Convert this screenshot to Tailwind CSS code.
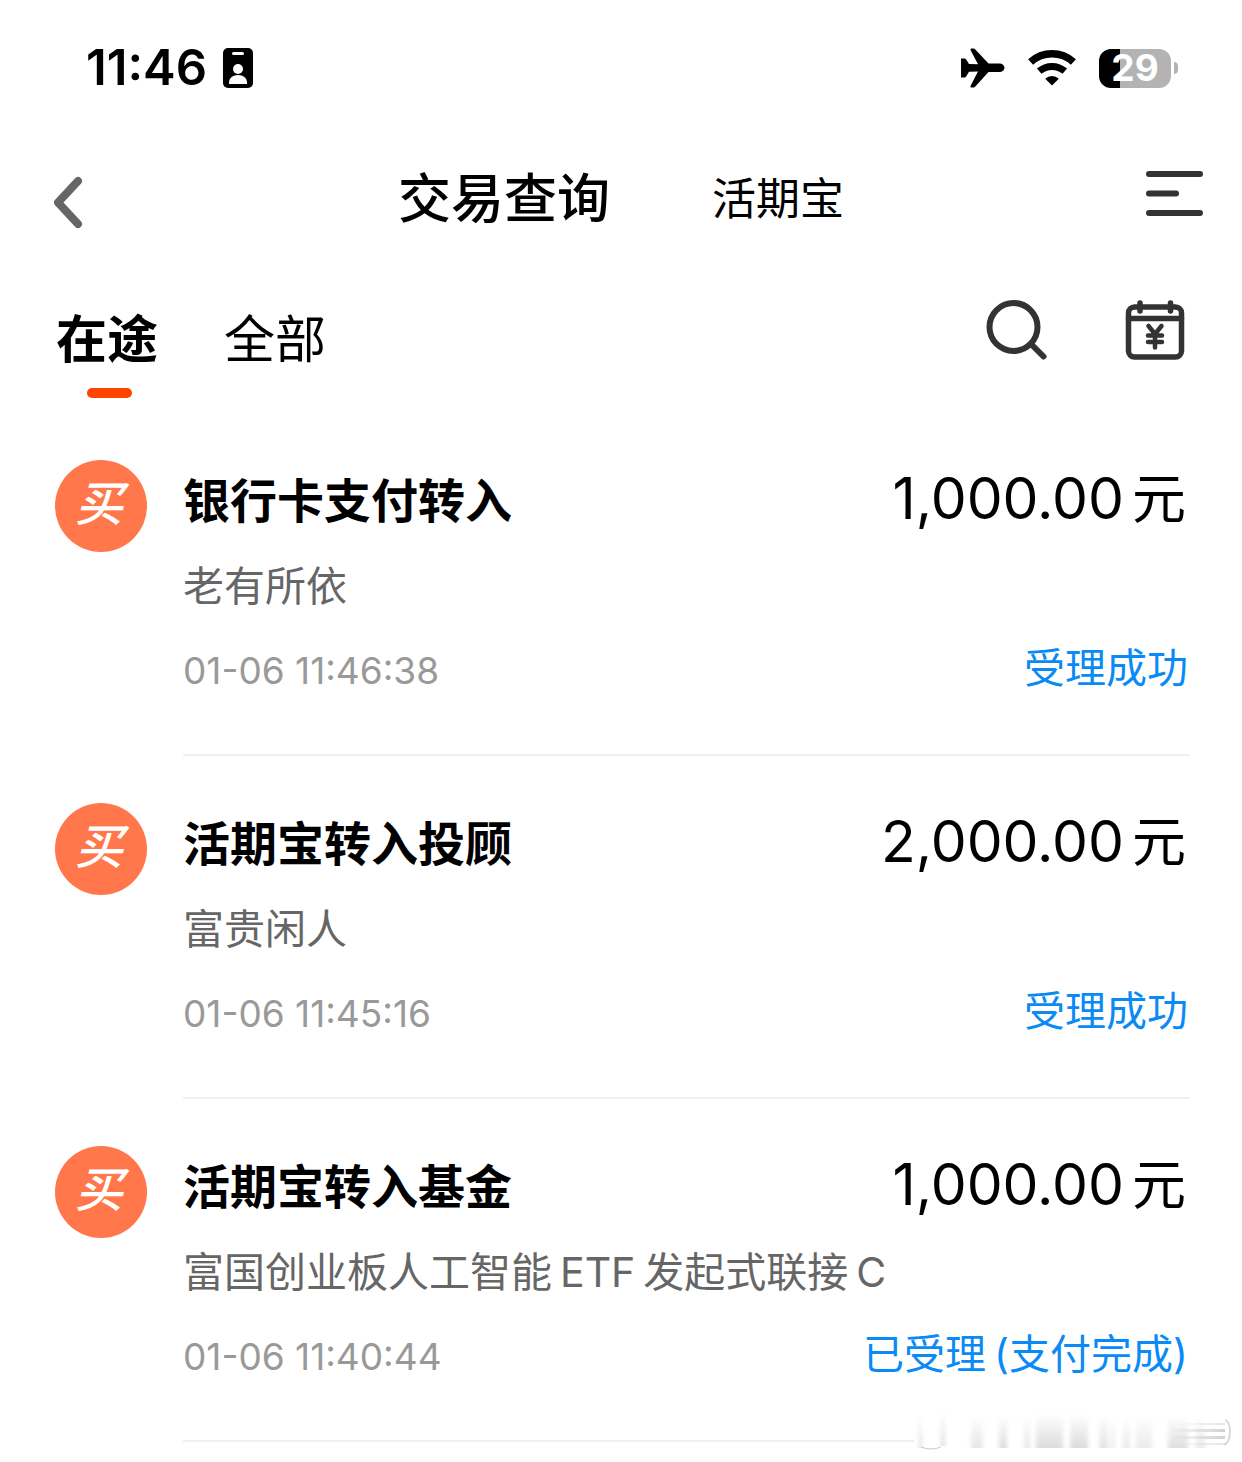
<!DOCTYPE html>
<html lang="zh-CN">
  <head>
    <meta charset="UTF-8" />
    <meta name="viewport" content="width=device-width, initial-scale=1.0" />
    <title>交易查询</title>
    <script src="https://cdn.jsdelivr.net/npm/@tailwindcss/browser@4"></script>
  </head>
  <body class="relative min-h-screen overflow-x-hidden bg-white font-['Inter','Noto_Sans_CJK_SC',sans-serif] text-black">
    <!-- Status bar -->
    <div class="flex h-[136px] items-center justify-between pl-[86px] pr-16">
      <div class="flex items-center gap-4">
        <span class="text-[49px] leading-[56px] font-semibold">11:46</span>
        <svg class="h-10 w-[30px]" viewBox="0 0 30 40">
          <rect width="30" height="40" rx="5" />
          <rect x="9" y="4" width="12" height="3" rx="1.5" fill="#fff" />
          <circle cx="15" cy="21" r="5" fill="#fff" />
          <path d="M6 36v-1.500c0-4.500 4-7.500 9-7.500s9 3 9 7.500V36z" fill="#fff" />
        </svg>
      </div>
      <div class="flex items-center gap-[23px]">
        <svg class="h-10 w-[44px]" viewBox="0 0 44 40">
          <path d="M0 10.500H3.500Q4.500 10.500 5 11.300L8 16L17 16.300L9.500 2Q9 .5 10.500 .5H12.500Q13.500 .5 14.300 1.500L27.500 15.500H38C41.500 15.500 43.500 17.700 43.500 19.700S41.500 24 38 24H27.500L14.300 38.500Q13.500 39.500 12.500 39.500H10.500Q9 39.500 9.500 38L17 23.500L8 23.800L5 28.700Q4.500 29.500 3.500 29.500H0Z" />
        </svg>
        <svg class="h-10 w-12" viewBox="0 0 48 40" fill="none" stroke="#000" stroke-width="7.500">
          <path d="M2.600 14a32 32 0 0 1 42.800 0" />
          <path d="M11.200 23.200a19.500 19.500 0 0 1 25.600 0" stroke-width="7" />
          <path d="M24 37.500l-6.800-6.800a9.800 9.800 0 0 1 13.600 0z" fill="#000" stroke="none" />
        </svg>
        <div class="flex items-center gap-[3px]">
          <div class="flex h-[39px] w-[72px] items-center justify-center rounded-[12px] bg-linear-to-r from-black from-[21px] to-[#b3b3b3] to-[21px] text-[37px] leading-[38px] font-bold text-white">29</div>
          <div class="h-3 w-1 rounded-r-full bg-[#b3b3b3]"></div>
        </div>
      </div>
    </div>

    <!-- Header -->
    <header class="grid h-[126px] grid-cols-[1fr_auto_1fr] items-center px-[38px]">
      <button type="button" aria-label="返回" class="justify-self-start pl-[14px]">
        <svg class="h-[60px] w-8" viewBox="0 0 32 60" fill="none" stroke="#666" stroke-width="8" stroke-linecap="round" stroke-linejoin="round">
          <path d="M26 12L6 33.500L26 55" />
        </svg>
      </button>
      <div class="flex items-center gap-[102px]">
        <h1 class="text-[53px] leading-[72px] font-medium">交易查询</h1>
        <a href="#" class="text-[44px] leading-[72px]">活期宝</a>
      </div>
      <button type="button" aria-label="菜单" class="justify-self-end">
        <svg class="h-[60px] w-[58px]" viewBox="0 0 58 60" stroke="#333" stroke-width="6" stroke-linecap="round">
          <path d="M3 5H54M3 24.500H30M3 44H54" />
        </svg>
      </button>
    </header>

    <!-- Tabs -->
    <nav class="flex h-[151px] justify-between pt-[34px] pl-14 pr-14">
      <div class="flex items-start gap-[66px] text-[51px] leading-[88px]">
        <button type="button" class="flex flex-col items-center font-bold">
          在途
          <span class="mt-1 ml-1 h-[10px] w-[45px] rounded-full bg-[#ff4400]"></span>
        </button>
        <button type="button">全部</button>
      </div>
      <div class="flex items-start gap-[76px]">
        <button type="button" aria-label="搜索">
          <svg class="h-[68px] w-[62px]" viewBox="0 0 62 68" fill="none" stroke="#333" stroke-width="6" stroke-linecap="round">
            <circle cx="27.500" cy="31" r="24" />
            <path d="M45 48L57.500 60.500" />
          </svg>
        </button>
        <button type="button" aria-label="日期">
          <svg class="h-[68px] w-[62px]" viewBox="0 0 62 68" fill="none" stroke="#333" stroke-width="5.500" stroke-linecap="round" stroke-linejoin="round">
            <rect x="4.500" y="11" width="53" height="50" rx="6" />
            <path d="M4.500 22.500H57.500M16 7V15M46.500 7V15" />
            <path d="M24.500 30L31 38L37.500 30M31 38V51.500M24 39.500H38M24 46H38" stroke-width="4.500" />
          </svg>
        </button>
      </div>
    </nav>

    <!-- Transactions -->
    <ul class="pl-[55px] pr-[52px]">
      <li class="flex gap-9 pt-[47px]">
        <div class="flex size-[92px] shrink-0 items-center justify-center rounded-full bg-[#ff774a] pr-1 pb-1 text-[48px] leading-[48px] font-medium text-white italic">买</div>
        <div class="flex-1 border-b-2 border-[#f0f0f0] pb-[49px]">
          <div class="flex h-[82px] items-center justify-between">
            <h2 class="text-[47px] leading-[60px] font-bold">银行卡支付转入</h2>
            <p class="flex items-baseline gap-2 pr-1 pb-1 text-[57px] leading-[72px]">1,000.00<span class="text-[54px]">元</span></p>
          </div>
          <p class="text-[41px] leading-[88px] text-[#666]">老有所依</p>
          <div class="flex h-[75px] items-center justify-between">
            <time class="pt-[6px] text-[37px] leading-[48px] text-[#999]">01-06 11:46:38</time>
            <span class="pr-[2px] text-[41px] leading-[60px] text-[#0a8af5]">受理成功</span>
          </div>
        </div>
      </li>
      <li class="flex gap-9 pt-[47px]">
        <div class="flex size-[92px] shrink-0 items-center justify-center rounded-full bg-[#ff774a] pr-1 pb-1 text-[48px] leading-[48px] font-medium text-white italic">买</div>
        <div class="flex-1 border-b-2 border-[#f0f0f0] pb-[49px]">
          <div class="flex h-[82px] items-center justify-between">
            <h2 class="text-[47px] leading-[60px] font-bold">活期宝转入投顾</h2>
            <p class="flex items-baseline gap-2 pr-1 pb-1 text-[57px] leading-[72px]">2,000.00<span class="text-[54px]">元</span></p>
          </div>
          <p class="text-[41px] leading-[88px] text-[#666]">富贵闲人</p>
          <div class="flex h-[75px] items-center justify-between">
            <time class="pt-[6px] text-[37px] leading-[48px] text-[#999]">01-06 11:45:16</time>
            <span class="pr-[2px] text-[41px] leading-[60px] text-[#0a8af5]">受理成功</span>
          </div>
        </div>
      </li>
      <li class="flex gap-9 pt-[47px]">
        <div class="flex size-[92px] shrink-0 items-center justify-center rounded-full bg-[#ff774a] pr-1 pb-1 text-[48px] leading-[48px] font-medium text-white italic">买</div>
        <div class="flex-1 border-b-2 border-[#f0f0f0] pb-[49px]">
          <div class="flex h-[82px] items-center justify-between">
            <h2 class="text-[47px] leading-[60px] font-bold">活期宝转入基金</h2>
            <p class="flex items-baseline gap-2 pr-1 pb-1 text-[57px] leading-[72px]">1,000.00<span class="text-[54px]">元</span></p>
          </div>
          <p class="flex gap-2 text-[41px] leading-[88px] text-[#666]"><span>富国创业板人工智能</span><span>ETF</span><span>发起式联接</span><span>C</span></p>
          <div class="flex h-[75px] items-center justify-between">
            <time class="pt-[6px] text-[37px] leading-[48px] text-[#999]">01-06 11:40:44</time>
            <span class="flex gap-2 pr-[2px] text-[41px] leading-[60px] text-[#0a8af5]"><span>已受理</span><span>(支付完成)</span></span>
          </div>
        </div>
      </li>
    </ul>

    <!-- Smudged mark over the last divider -->
    <svg class="absolute right-2 bottom-2 h-[46px] w-[320px]" viewBox="0 0 320 46" aria-hidden="true">
      <defs>
        <linearGradient id="fade" x1="0" y1="0" x2="0" y2="1">
          <stop offset="0" stop-color="#dcdcdc" stop-opacity="0" />
          <stop offset="1" stop-color="#dcdcdc" />
        </linearGradient>
        <linearGradient id="streak">
          <stop offset="0" stop-color="#ccc" stop-opacity="0" />
          <stop offset="1" stop-color="#ccc" />
        </linearGradient>
        <filter id="soft" x="-5%" y="-5%" width="110%" height="110%"><feGaussianBlur stdDeviation="2 0.500" /></filter>
      </defs>
      <rect width="320" height="46" fill="#fff" />
      <g fill="url(#fade)" filter="url(#soft)">
        <rect x="5" y="8" width="3" height="32" />
        <rect x="27" y="4" width="4" height="34" />
        <rect x="57" y="8" width="12" height="32" opacity=".7" />
        <rect x="85" y="8" width="8" height="32" />
        <rect x="110" y="8" width="6" height="32" opacity=".7" />
        <rect x="122" y="6" width="27" height="34" />
        <rect x="156" y="6" width="18" height="34" />
        <rect x="185" y="8" width="9" height="32" opacity=".8" />
        <rect x="197" y="8" width="4" height="32" opacity=".6" />
        <rect x="209" y="8" width="7" height="32" opacity=".6" />
        <rect x="222" y="8" width="16" height="32" opacity=".6" />
        <rect x="254" y="8" width="20" height="32" opacity=".9" />
        <rect x="282" y="8" width="9" height="32" opacity=".6" />
      </g>
      <g fill="url(#streak)">
        <rect x="262" y="15" width="49" height="2" opacity=".5" />
        <rect x="255" y="21" width="56" height="3" opacity=".9" />
        <rect x="255" y="28" width="56" height="3" opacity=".9" />
        <rect x="262" y="35" width="49" height="2" opacity=".5" />
      </g>
      <path d="M7 39q10 4 20 0" fill="none" stroke="#ccc" />
      <path d="M311 12q5 2 5 12t-6 13" fill="none" stroke="#d8d8d8" stroke-width="2" />
    </svg>
  </body>
</html>
